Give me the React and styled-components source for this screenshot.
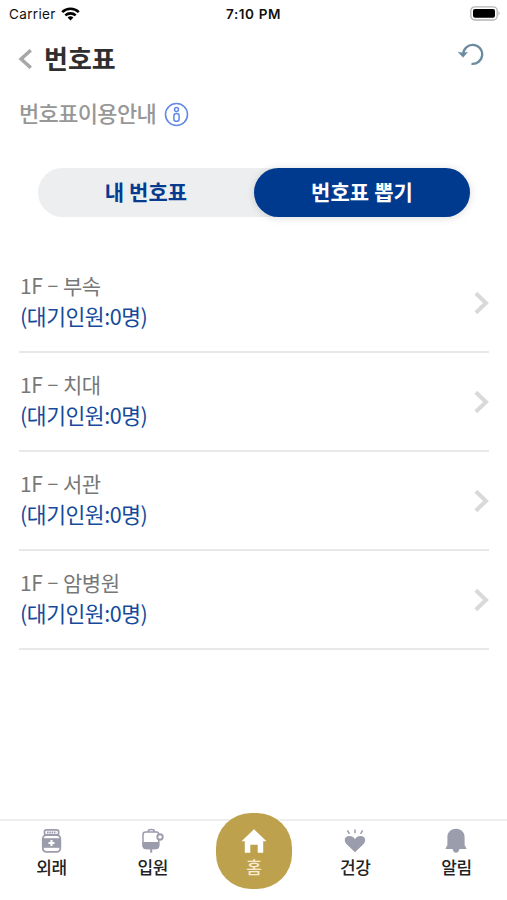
import styled, { createGlobalStyle } from 'styled-components';

const floors = ['부속', '치대', '서관', '암병원'];

const App = () => {
    return (
        <Screen>
            <GlobalStyle />
            <StatusBar>
                <Carrier>Carrier <WifiIcon /></Carrier>
                <Clock>7:10 PM</Clock>
                <BatteryIcon />
            </StatusBar>
            <Header>
                <BackButton aria-label="back"><BackIcon /></BackButton>
                <Title>번호표</Title>
                <RefreshButton aria-label="refresh"><RefreshIcon /></RefreshButton>
            </Header>
            <Guide>
                <GuideText>번호표이용안내</GuideText>
                <InfoIcon />
            </Guide>
            <Tabs>
                <Tab>내 번호표</Tab>
                <Tab $active>번호표 뽑기</Tab>
            </Tabs>
            <List>
                {floors.map((name) => (
                    <ListItem key={name}>
                        <Info>
                            <Place>1F<Dash>–</Dash>{name}</Place>
                            <Waiting>(대기인원:0명)</Waiting>
                        </Info>
                        <ArrowIcon />
                    </ListItem>
                ))}
            </List>
            <BottomNav>
                <NavItem><JarIcon /><NavLabel>외래</NavLabel></NavItem>
                <NavItem><DripIcon /><NavLabel>입원</NavLabel></NavItem>
                <HomeItem><HomeIcon /><HomeLabel>홈</HomeLabel></HomeItem>
                <NavItem><HeartIcon /><NavLabel>건강</NavLabel></NavItem>
                <NavItem><BellIcon /><NavLabel>알림</NavLabel></NavItem>
            </BottomNav>
        </Screen>
    )
};

export default App;

const WifiIcon = () => (
    <svg width="19" height="14" viewBox="0 0 19 14">
        <g fill="none" stroke="#000" strokeWidth="2.6">
            <path d="M1.2 5.1a12 12 0 0 1 16.6 0" />
            <path d="M4.3 8.4a7.6 7.6 0 0 1 10.4 0" />
        </g>
        <path d="M9.5 13.6 6.6 10.6a4.1 4.1 0 0 1 5.8 0z" />
    </svg>
);

const BatteryIcon = () => (
    <svg width="31" height="15" viewBox="0 0 31 15">
        <rect x=".8" y=".8" width="26.4" height="13.2" rx="4" fill="#fff" stroke="#b4b4b4" strokeWidth="1.3" />
        <rect x="3" y="3" width="22" height="8.8" rx="2" />
        <path d="M28.5 5q2.4 2.4 0 4.8z" fill="#b4b4b4" />
    </svg>
);

const BackIcon = () => (
    <svg width="14" height="20" viewBox="0 0 14 20">
        <path d="M12.8 1.2 3.1 10l9.7 8.8" fill="none" stroke="#a8a8a8" strokeWidth="3.5" />
    </svg>
);

const RefreshIcon = () => (
    <svg width="26" height="23" viewBox="0 0 26 23">
        <path d="M5.2 11.5A9.5 9.5 0 1 1 13.5 20.8" fill="none" stroke="#6c8ba0" strokeWidth="2.3" />
        <path d="M.3 9.3q4.500 1.400 9.100 0l-4.300 5z" fill="#6c8ba0" stroke="#6c8ba0" strokeWidth=".6" />
    </svg>
);

const InfoIcon = () => (
    <svg width="25" height="25" viewBox="0 0 25 25" fill="none" stroke="#6289e6">
        <circle cx="12.5" cy="12.5" r="11" strokeWidth="1.6" />
        <circle cx="12.5" cy="7.5" r="2" strokeWidth="1.5" />
        <rect x="9.9" y="11.4" width="5.2" height="7.9" rx="2.4" strokeWidth="1.5" />
    </svg>
);

const ArrowIcon = () => (
    <svg width="16" height="24" viewBox="0 0 16 24">
        <path d="m2.8 2.2 10.2 9.8-10.2 9.8" fill="none" stroke="#d9d9d9" strokeWidth="4" />
    </svg>
);

const JarIcon = () => (
    <svg width="24" height="26" viewBox="0 0 24 26">
        <rect x="4.5" y="1.9" width="14.2" height="5" rx="2" fill="#fff" stroke="#9b9cac" strokeWidth="1.7" />
        <path d="M7 4.5h9.5" stroke="#9b9cac" strokeWidth="1.8" strokeDasharray="1.6 .7" />
        <rect x="2.8" y="7.2" width="17.5" height="16.6" rx="3.5" fill="#fff" stroke="#9b9cac" strokeWidth="1.8" />
        <path d="M2.5 10.2h18v9.6h-18z" fill="#9b9cac" />
        <path d="M11.5 12v6M8.5 15h6" stroke="#fff" strokeWidth="2.1" />
    </svg>
);

const DripIcon = () => (
    <svg width="24" height="26" viewBox="0 0 24 26" fill="none" stroke="#9b9cac" strokeWidth="1.5">
        <path d="M7.3 4V3q0-1.500 3-1.500t3 1.500v1" />
        <path d="M4.500 3.900h11q2.200 0 2.200 2.200V17q0 3.500-3.500 3.500H5.500Q2 20.500 2 17V6.400q0-2.500 2.500-2.500z" fill="#fff" />
        <path d="M1.500 14H18.300v3q0 4.300-4 4.300H5.500q-4 0-4-4.300z" fill="#9b9cac" stroke="none" />
        <path d="M10.200 20v4.700" strokeWidth="2" />
        <circle cx="19" cy="9" r="2.700" fill="#fff" strokeWidth="1.900" />
    </svg>
);

const HomeIcon = () => (
    <svg width="26" height="26" viewBox="0 0 26 26">
        <path d="m13 1.2 12.5 12h-3.300v11.500h-5.500v-7.900H9.300v7.900H3.800V13.200H.5z" fill="#fff" />
    </svg>
);

const HeartIcon = () => (
    <svg width="24" height="26" viewBox="0 0 24 26">
        <path d="M12 24.3 3.4 16C.2 12.3 2.200 8 6.200 8c2.800 0 4.500 1.200 5.800 3.200C13.300 9.200 15 8 17.800 8c4 0 6 4.300 2.800 8z" fill="#9b9cac" />
        <path d="m4.4 2.400 2 3.500M12 1.400v3.800M19.600 2.400l-2 3.500" stroke="#9b9cac" strokeWidth="1.5" />
    </svg>
);

const BellIcon = () => (
    <svg width="24" height="26" viewBox="0 0 24 26" fill="#9b9cac">
        <path d="M12 .8c5.300 0 8.600 3.700 8.600 8.400v7.700l2 4.200H1.400l2-4.200V9.200C3.400 4.500 6.700.8 12 .8z" />
        <path d="M8.600 20.800h6.800q-.6 3.900-3.400 3.900t-3.400-3.900z" />
    </svg>
);

const GlobalStyle = createGlobalStyle`
    body {
        margin: 0;
        background-color: #fff;
        font-family: "Noto Sans CJK KR", sans-serif;
    }

    svg {
        display: block;
        flex-shrink: 0;
    }
`;

const Screen = styled.div`
    display: flex;
    flex-direction: column;
    height: 900px;
    overflow: hidden;
`;

const StatusBar = styled.div`
    display: grid;
    grid-template-columns: 1fr auto 1fr;
    align-items: center;
    height: 27px;
    padding: 0 6px 0 9px;
    font-family: "Inter", sans-serif;
    font-size: 13.5px;
    color: #111;

    > svg {
        justify-self: end;
    }
`;

const Carrier = styled.div`
    display: flex;
    align-items: center;
    gap: 5px;
    letter-spacing: 0.35px;
`;

const Clock = styled.div`
    margin-right: 3px;
    font-weight: 600;
    letter-spacing: 0.6px;
`;

const Header = styled.header`
    display: flex;
    align-items: center;
    height: 64px;
    padding: 0 23px 0 18px;
`;

const BackButton = styled.button`
    border: 0;
    padding: 0;
    background: none;
`;

const Title = styled.h1`
    flex: 1;
    margin: 0 0 2px 12px;
    font-size: 26px;
    font-weight: 700;
    line-height: 36px;
    color: #2f2f2f;
`;

const RefreshButton = styled(BackButton)`
    margin-bottom: 9px;
`;

const Guide = styled.div`
    display: flex;
    align-items: center;
    gap: 8px;
    height: 46px;
    padding-left: 19px;
`;

const GuideText = styled.span`
    margin-bottom: 4px;
    font-size: 22px;
    font-weight: 500;
    letter-spacing: -0.65px;
    color: #979797;
`;

const Tabs = styled.div`
    display: flex;
    height: 49px;
    margin: 31px 37px 0 38px;
    border-radius: 25px;
    background-color: #eceef0;
`;

const Tab = styled.button`
    flex: 1;
    border: 0;
    border-radius: 25px;
    padding: 0 0 4px;
    font: 700 21px "Noto Sans CJK KR", sans-serif;
    letter-spacing: 0.1px;
    color: ${({ $active }) => $active ? '#fff' : '#063b8f'};
    background-color: ${({ $active }) => $active ? '#003a8f' : 'transparent'};
    box-shadow: ${({ $active }) => $active ? '0 1px 8px rgba(0, 0, 0, 0.14)' : 'none'};
`;

const List = styled.ul`
    flex: 1;
    margin: 37px 18px 0 19px;
    padding: 0;
    list-style-type: none;
`;

const ListItem = styled.li`
    display: flex;
    align-items: center;
    justify-content: space-between;
    box-sizing: border-box;
    height: 99px;
    border-bottom: 2px solid #e8e8e8;
`;

const Info = styled.div`
    padding: 0 0 5px 1px;
`;

const Place = styled.div`
    padding-top: 1px;
    font-size: 21px;
    line-height: 30px;
    letter-spacing: -0.5px;
    color: #777;
`;

const Dash = styled.span`
    margin: 0 5px;
    line-height: 1;
    vertical-align: 2px;
`;

const Waiting = styled.div`
    font-size: 21.5px;
    line-height: 31px;
    letter-spacing: -0.45px;
    color: #164a9b;
`;

const BottomNav = styled.nav`
    display: grid;
    grid-template-columns: repeat(5, 1fr);
    height: 79px;
    padding-left: 1px;
    border-top: 2px solid #eee;
`;

const NavItem = styled.a`
    display: flex;
    flex-direction: column;
    align-items: center;
    padding-top: 7px;
`;

const NavLabel = styled.span`
    margin-top: 1px;
    font-size: 17px;
    font-weight: 500;
    line-height: 24px;
    letter-spacing: -0.4px;
    color: #222;
`;

const HomeItem = styled(NavItem)`
    box-sizing: border-box;
    justify-self: center;
    width: 76px;
    height: 76px;
    margin-top: -8px;
    padding-top: 15px;
    border-radius: 35px;
    background-color: #bea14d;
`;

const HomeLabel = styled(NavLabel)`
    color: #f8ead2;
`;
